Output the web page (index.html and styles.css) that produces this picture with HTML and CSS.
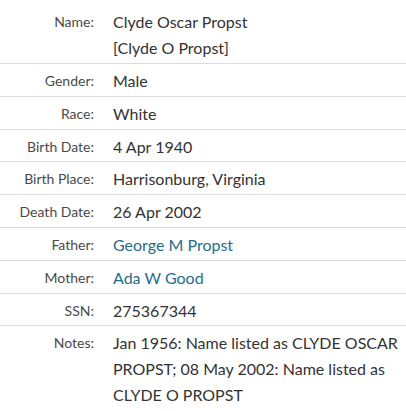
FILE: index.html
```html
<!DOCTYPE html>
<html lang="en">
<head>
<meta charset="utf-8">
<title>Record</title>
<link rel="stylesheet" href="styles.css">
</head>
<body>
<dl class="record">
  <div class="row row-first">
    <dt class="label">Name:</dt>
    <dd class="value">Clyde Oscar Propst<br>[Clyde O Propst]</dd>
  </div>
  <div class="row">
    <dt class="label">Gender:</dt>
    <dd class="value">Male</dd>
  </div>
  <div class="row">
    <dt class="label">Race:</dt>
    <dd class="value">White</dd>
  </div>
  <div class="row">
    <dt class="label">Birth Date:</dt>
    <dd class="value">4 Apr 1940</dd>
  </div>
  <div class="row">
    <dt class="label">Birth Place:</dt>
    <dd class="value">Harrisonburg, Virginia</dd>
  </div>
  <div class="row">
    <dt class="label">Death Date:</dt>
    <dd class="value">26 Apr 2002</dd>
  </div>
  <div class="row">
    <dt class="label">Father:</dt>
    <dd class="value"><a class="link" href="#">George M Propst</a></dd>
  </div>
  <div class="row">
    <dt class="label">Mother:</dt>
    <dd class="value"><a class="link" href="#">Ada W Good</a></dd>
  </div>
  <div class="row">
    <dt class="label">SSN:</dt>
    <dd class="value">275367344</dd>
  </div>
  <div class="row row-last">
    <dt class="label">Notes:</dt>
    <dd class="value">Jan 1956: Name listed as CLYDE OSCAR PROPST; 08 May 2002: Name listed as CLYDE O PROPST</dd>
  </div>
</dl>
</body>
</html>
```
FILE: styles.css
```css
html, body {
  margin: 0;
  padding: 0;
  background: #ffffff;
}

body {
  font-family: "Source Sans Pro", Lato, sans-serif;
  font-size: 16px;
  color: #333333;
}

.record {
  margin: 0;
  padding: 0;
}

.row {
  display: grid;
  grid-template-columns: 94px 1fr;
  column-gap: 19px;
  padding: 4px 0 2px;
  line-height: 25.8px;
  border-bottom: 1px solid #dddddd;
}

.row-first {
  padding-top: 9.4px;
}

.row-last {
  border-bottom: none;
}

.label {
  margin: 0;
  text-align: right;
  color: #4a4a4a;
  font-size: 14px;
}

.value {
  margin: 0;
  padding-right: 6px;
}

.link {
  color: #266d8c;
  text-decoration: none;
}
```
